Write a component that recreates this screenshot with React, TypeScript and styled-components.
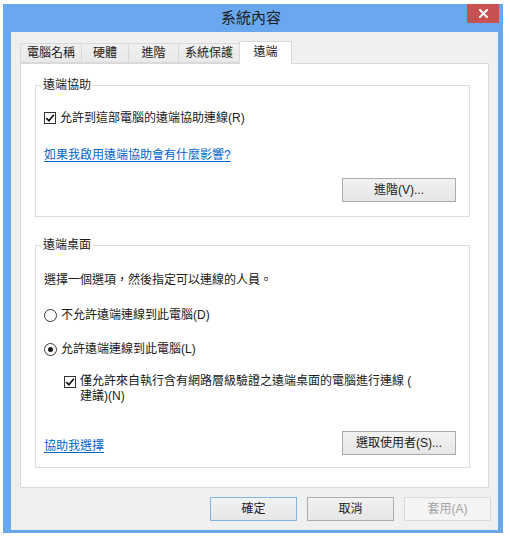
import React from 'react';
import styled, { createGlobalStyle } from 'styled-components';

const Global = createGlobalStyle`
  html, body { margin: 0; padding: 0; background: #ffffff; }
  body {
    font-family: "Liberation Sans", "Noto Sans CJK TC", sans-serif;
    font-size: 12px;
    color: #1b1b1b;
  }
  * { box-sizing: border-box; }
`;

const Window = styled.div`
  width: 500px;
  margin: 4px 0 0 3px;
  background: #69a8ee;
  padding-bottom: 3px;
  display: flex;
  flex-direction: column;
`;

const TitleBar = styled.div`
  height: 28px;
  display: grid;
  grid-template-columns: 1fr auto 1fr;
  align-items: center;
  padding-right: 4px;
`;

const Title = styled.div`
  grid-column: 2;
  font-size: 15px;
  line-height: 20px;
  color: #1e1e1e;
`;

const CloseButton = styled.div`
  grid-column: 3;
  justify-self: end;
  align-self: start;
  width: 32px;
  height: 19px;
  background: #c75050;
  display: flex;
  align-items: center;
  justify-content: center;
`;

const Client = styled.div`
  margin: 0 5px 0 8px;
  background: #f0f0f0;
  padding: 9px 7px 9px 9px;
  display: flex;
  flex-direction: column;
`;

const TabStrip = styled.div`
  height: 22px;
  display: flex;
  align-items: flex-end;
  margin-right: 2px;
  position: relative;
  z-index: 1;
`;

const Tab = styled.div<{ $w: number; $active?: boolean }>`
  width: ${(p) => p.$w}px;
  height: ${(p) => (p.$active ? 23 : 20)}px;
  margin-bottom: ${(p) => (p.$active ? -1 : 0)}px;
  margin-left: -1px;
  &:first-child { margin-left: 0; }
  border: 1px solid #d9d9d9;
  border-bottom: ${(p) => (p.$active ? 'none' : '1px solid #d9d9d9')};
  background: ${(p) => (p.$active ? '#ffffff' : 'linear-gradient(#f0f0f0, #e9e9e9)')};
  display: flex;
  align-items: center;
  justify-content: center;
  padding-bottom: ${(p) => (p.$active ? 3 : 0)}px;
  line-height: 16px;
  position: relative;
  z-index: ${(p) => (p.$active ? 2 : 1)};
  white-space: nowrap;
`;

const Panel = styled.div`
  height: 425px;
  margin-right: 2px;
  background: #ffffff;
  border: 1px solid #d9d9d9;
  padding: 13px 18px 0 14px;
  display: flex;
  flex-direction: column;
`;

const Group = styled.fieldset<{ $gap?: number }>`
  margin: ${(p) => p.$gap ?? 0}px 0 0 0;
  padding: 0;
  min-width: 0;
  border: 1px solid #dcdcdc;
`;

const Legend = styled.legend`
  margin-left: 5px;
  padding: 0 2px;
  line-height: 16px;
  font-size: 12px;
  color: #1b1b1b;
`;

const GroupBody = styled.div`
  display: flex;
  flex-direction: column;
  align-items: flex-start;
  padding: 0 13px 0 8px;
`;

const Row = styled.div<{ $top: number; $indent?: number; $two?: boolean }>`
  margin-top: ${(p) => p.$top}px;
  margin-left: ${(p) => p.$indent ?? 0}px;
  display: flex;
  align-items: ${(p) => (p.$two ? 'flex-start' : 'center')};
  line-height: ${(p) => (p.$two ? 15 : 18)}px;
  gap: 4px;
  white-space: nowrap;
`;

const Text = styled.div<{ $top: number }>`
  margin-top: ${(p) => p.$top}px;
  line-height: 18px;
  white-space: nowrap;
`;

const Link = styled.a<{ $top?: number }>`
  margin-top: ${(p) => p.$top ?? 0}px;
  line-height: 18px;
  color: #0066cc;
  text-decoration: underline;
  text-underline-offset: 2px;
  cursor: pointer;
  white-space: nowrap;
`;

const Box = styled.span<{ $two?: boolean }>`
  width: 12px;
  height: 12px;
  flex: none;
  margin-top: ${(p) => (p.$two ? 2 : 0)}px;
  border: 1px solid #333333;
  background: #ffffff;
  display: flex;
  align-items: center;
  justify-content: center;
`;

const Radio = styled.span<{ $on?: boolean }>`
  width: 13px;
  height: 13px;
  flex: none;
  border: 1px solid #3a3a3a;
  border-radius: 50%;
  background: #ffffff;
  display: flex;
  align-items: center;
  justify-content: center;
  &::after {
    content: '';
    display: ${(p) => (p.$on ? 'block' : 'none')};
    width: 5px;
    height: 5px;
    border-radius: 50%;
    background: #1a1a1a;
  }
`;

const ActionLine = styled.div<{ $top: number; $bottom: number; $split?: boolean }>`
  align-self: stretch;
  margin-top: ${(p) => p.$top}px;
  margin-bottom: ${(p) => p.$bottom}px;
  display: flex;
  justify-content: ${(p) => (p.$split ? 'space-between' : 'flex-end')};
  align-items: flex-end;
`;

const Button = styled.button<{ $w: number; $default?: boolean }>`
  width: ${(p) => p.$w}px;
  height: 24px;
  margin: 0;
  padding: 0;
  font-family: inherit;
  font-size: 12px;
  line-height: 16px;
  color: ${(p) => (p.disabled ? '#a3a3a3' : '#1b1b1b')};
  border: 1px solid ${(p) => (p.disabled ? '#d9d9d9' : p.$default ? '#7eb4ea' : '#acacac')};
  background: ${(p) => (p.disabled ? '#f4f4f4' : 'linear-gradient(#f2f2f2, #e6e6e6)')};
  border-radius: 0;
`;

const ButtonRow = styled.div`
  margin-top: 9px;
  display: flex;
  justify-content: flex-end;
  gap: 10px;
`;

const Check = () => (
  <svg width="10" height="10" viewBox="0 0 10 10">
    <path d="M1.3 5.2 L3.9 7.8 L8.8 1.8" fill="none" stroke="#111" strokeWidth="1.7" />
  </svg>
);

const CloseX = () => (
  <svg width="9" height="9" viewBox="0 0 9 9">
    <path d="M1 1 L8 8 M8 1 L1 8" stroke="#ffffff" strokeWidth="2" strokeLinecap="square" />
  </svg>
);

export default function App() {
  return (
    <>
      <Global />
      <Window>
        <TitleBar>
          <Title>系統內容</Title>
          <CloseButton>
            <CloseX />
          </CloseButton>
        </TitleBar>
        <Client>
          <TabStrip>
            <Tab $w={62}>電腦名稱</Tab>
            <Tab $w={48}>硬體</Tab>
            <Tab $w={51}>進階</Tab>
            <Tab $w={62}>系統保護</Tab>
            <Tab $w={53} $active>遠端</Tab>
          </TabStrip>
          <Panel>
            <Group>
              <Legend>遠端協助</Legend>
              <GroupBody>
                <Row $top={16}>
                  <Box>
                    <Check />
                  </Box>
                  允許到這部電腦的遠端協助連線(R)
                </Row>
                <Link $top={19}>如果我啟用遠端協助會有什麼影響?</Link>
                <ActionLine $top={14} $bottom={14}>
                  <Button $w={114}>進階(V)...</Button>
                </ActionLine>
              </GroupBody>
            </Group>
            <Group $gap={20}>
              <Legend>遠端桌面</Legend>
              <GroupBody>
                <Text $top={18}>選擇一個選項，然後指定可以連線的人員。</Text>
                <Row $top={17}>
                  <Radio />
                  不允許遠端連線到此電腦(D)
                </Row>
                <Row $top={16}>
                  <Radio $on />
                  允許遠端連線到此電腦(L)
                </Row>
                <Row $top={16} $indent={20} $two>
                  <Box $two>
                    <Check />
                  </Box>
                  <span>
                    僅允許來自執行含有網路層級驗證之遠端桌面的電腦進行連線 (
                    <br />
                    建議)(N)
                  </span>
                </Row>
                <ActionLine $top={27} $bottom={12} $split>
                  <Link>協助我選擇</Link>
                  <Button $w={114}>選取使用者(S)...</Button>
                </ActionLine>
              </GroupBody>
            </Group>
          </Panel>
          <ButtonRow>
            <Button $w={87} $default>確定</Button>
            <Button $w={87}>取消</Button>
            <Button $w={87} disabled>套用(A)</Button>
          </ButtonRow>
        </Client>
      </Window>
    </>
  );
}
